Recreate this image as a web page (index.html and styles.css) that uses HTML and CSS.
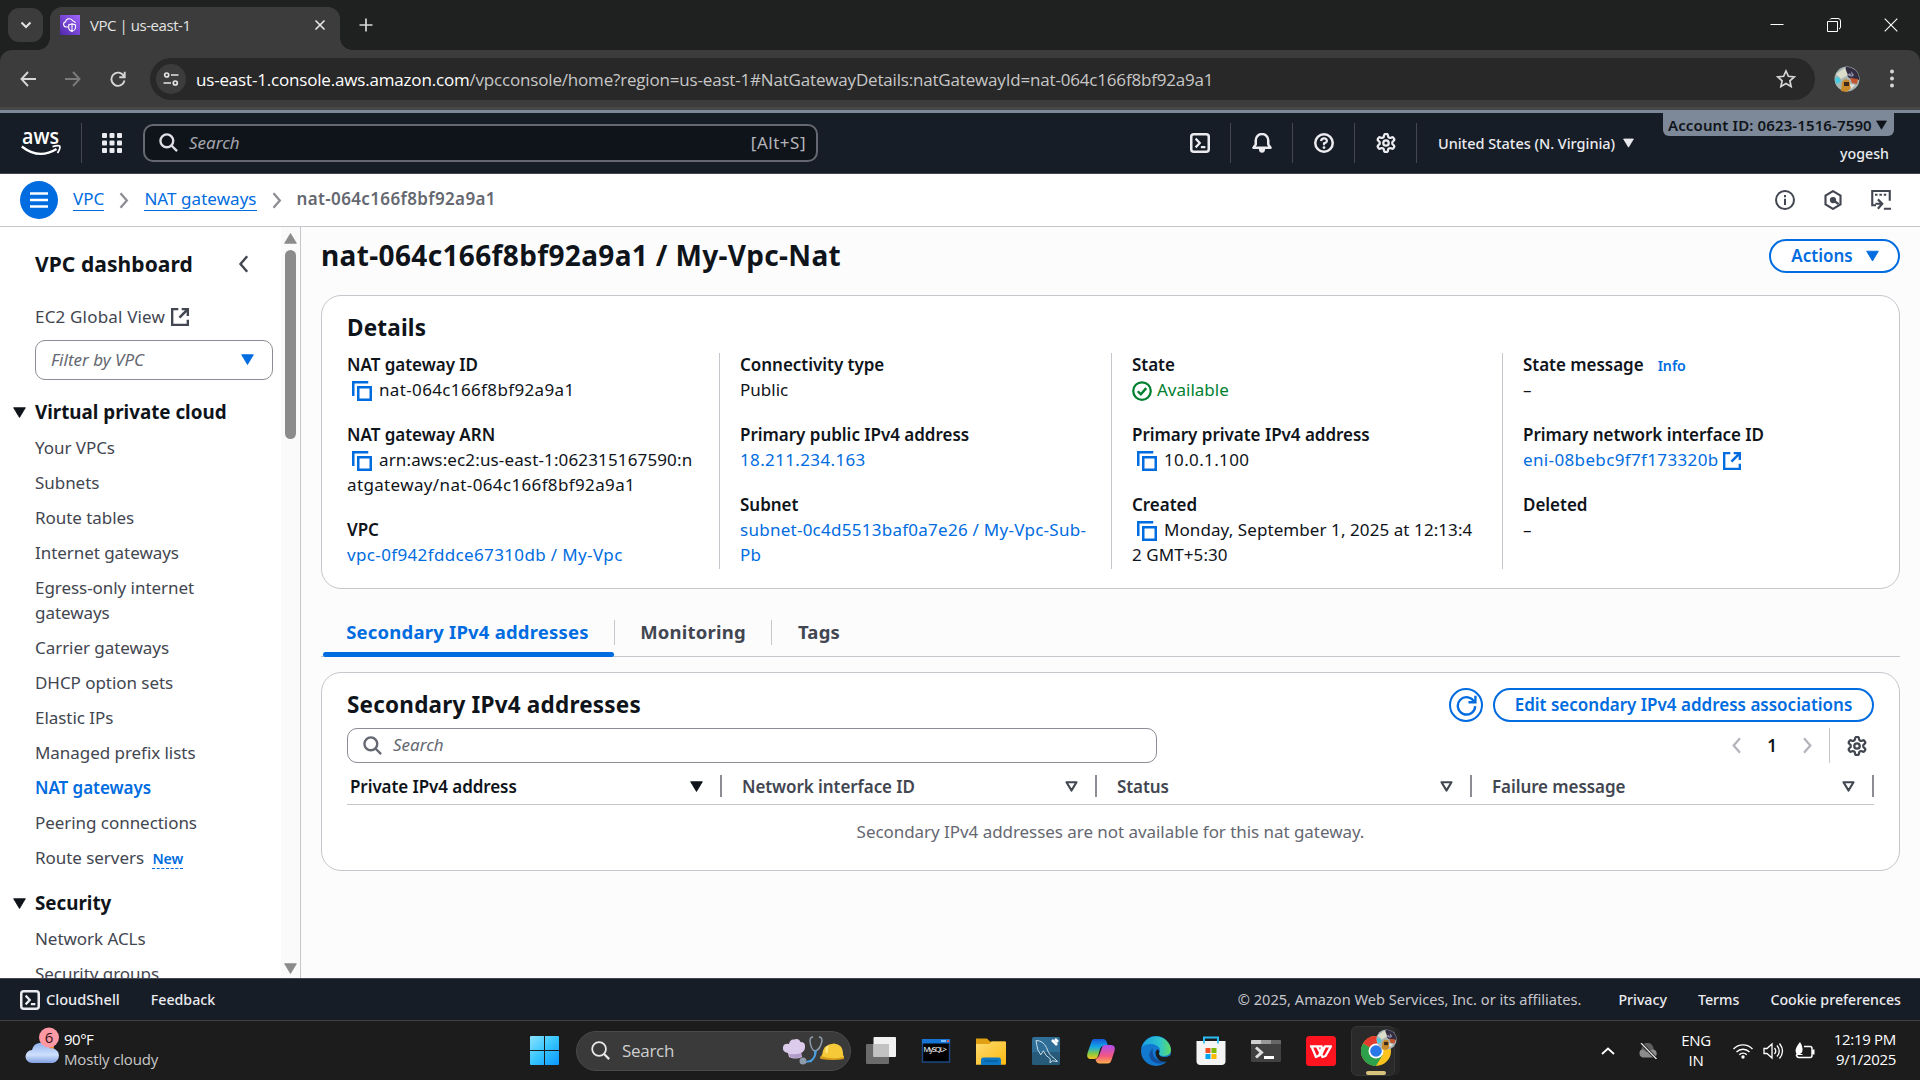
FILE: index.html
```html
<!DOCTYPE html>
<html lang="en">
<head>
<meta charset="utf-8">
<title>VPC | us-east-1</title>
<link rel="stylesheet" href="styles.css">
</head>
<body>
<svg class="defs" width="0" height="0">
  <symbol id="search" viewBox="0 0 16 16"><circle cx="6.6" cy="6.6" r="5.4" fill="none" stroke="currentColor" stroke-width="2"/><path d="M10.5 10.5l4.7 4.7" stroke="currentColor" stroke-width="2" fill="none"/></symbol>
  <symbol id="copy" viewBox="0 0 16 16"><path d="M1 12V1h12M5 5h10v10H5z" fill="none" stroke="currentColor" stroke-width="2"/></symbol>
  <symbol id="external" viewBox="0 0 16 16"><path d="M6.5 1H1v14h14v-4.5M9.5 1H15v6M15 1L7.5 8.500" fill="none" stroke="currentColor" stroke-width="2.200"/></symbol>
  <symbol id="shell" viewBox="0 0 16 16"><rect x="1" y="1" width="14" height="14" rx="2" fill="none" stroke="currentColor" stroke-width="2"/><path d="M4.5 4.500L7.800 8l-3.300 3.500M8.700 11.200h3.600" fill="none" stroke="currentColor" stroke-width="1.800"/></symbol>
  <symbol id="gear" viewBox="1 1 22 22"><path d="M12.22 2h-.44a2 2 0 0 0-2 2v.18a2 2 0 0 1-1 1.73l-.43.25a2 2 0 0 1-2 0l-.15-.08a2 2 0 0 0-2.73.73l-.22.38a2 2 0 0 0 .73 2.73l.15.1a2 2 0 0 1 1 1.72v.51a2 2 0 0 1-1 1.74l-.15.09a2 2 0 0 0-.73 2.73l.22.38a2 2 0 0 0 2.73.73l.15-.08a2 2 0 0 1 2 0l.43.25a2 2 0 0 1 1 1.73V20a2 2 0 0 0 2 2h.44a2 2 0 0 0 2-2v-.18a2 2 0 0 1 1-1.73l.43-.25a2 2 0 0 1 2 0l.15.08a2 2 0 0 0 2.73-.73l.22-.39a2 2 0 0 0-.73-2.73l-.15-.08a2 2 0 0 1-1-1.74v-.5a2 2 0 0 1 1-1.74l.15-.09a2 2 0 0 0 .73-2.73l-.22-.38a2 2 0 0 0-2.73-.73l-.15.08a2 2 0 0 1-2 0l-.43-.25a2 2 0 0 1-1-1.73V4a2 2 0 0 0-2-2z" fill="none" stroke="currentColor" stroke-width="2.5"/><circle cx="12" cy="12" r="3" fill="none" stroke="currentColor" stroke-width="2.5"/></symbol>
  <symbol id="tri" viewBox="0 0 12 10"><path d="M.6 .6h10.8L6 9.6z" fill="currentColor" stroke="currentColor" stroke-width=".8" stroke-linejoin="round"/></symbol>
  <symbol id="tri-open" viewBox="0 0 12 10"><path d="M1.4 1.1h9.2L6 8.7z" fill="none" stroke="currentColor" stroke-width="2" stroke-linejoin="round"/></symbol>
  <symbol id="chev" viewBox="0 0 10 18"><path d="M1.3 1.3L8 9l-6.7 7.7" fill="none" stroke="currentColor" stroke-width="2.4"/></symbol>
  <symbol id="portrait" viewBox="0 0 26 26"><circle cx="13" cy="13" r="12.5" fill="#a9b6b4"/><path d="M12 1a12 12 0 0 1 13 13l-10-2-4-6z" fill="#332c40"/><path d="M2 8l9-6 3 7-7 4z" fill="#dcdccb"/><path d="M1 12l4-1 2 5-5 2z" fill="#48cbe0"/><path d="M7 25l1-9 3-3 4 1 2 8-4 4z" fill="#c98a2b"/><path d="M16 12l8 1-1 5-5-1z" fill="#c4562e"/><path d="M17 5l3 4-2 2zM13 9l3-2 2 4z" fill="#8e95ad"/><path d="M10 16h5v4h-5z" fill="#3d2a1c"/><path d="M16 18l5 1-4 4z" fill="#e8e4da"/></symbol>
</svg>

<header class="chrome">
  <div class="tabstrip">
    <div class="tab-search"><svg width="12" height="8" viewBox="0 0 12 8"><path d="M1.5 1.5L6 6l4.500-4.500" fill="none" stroke="#e3e3e3" stroke-width="2"/></svg></div>
    <div class="tab">
      <svg class="favicon" width="20" height="20" viewBox="0 0 20 20"><defs><linearGradient id="fav" x1="0" y1="1" x2="1" y2="0"><stop offset="0" stop-color="#4d27a8"/><stop offset="1" stop-color="#a166ff"/></linearGradient></defs><rect width="20" height="20" fill="url(#fav)"/><path d="M8 12H6a2.600 2.600 0 0 1-.5-5.100A4 4 0 0 1 13 6q2 .2 2.400 2" fill="none" stroke="#fff" stroke-width="1.100"/><path d="M12 8.800l3.500 1.200v3q-.5 2.500-3.500 3.600Q9 15.500 8.700 13v-3zM12 9v7" fill="none" stroke="#fff" stroke-width="1.100"/></svg>
      <span class="tab-title">VPC | us-east-1</span>
      <svg width="12" height="12" viewBox="0 0 12 12"><path d="M1.500 1.500l9 9M10.500 1.500l-9 9" stroke="#e3e3e3" stroke-width="1.700"/></svg>
    </div>
    <svg class="plus" width="14" height="14" viewBox="0 0 14 14"><path d="M7 .5v13M.5 7h13" stroke="#d8d8d8" stroke-width="1.700"/></svg>
    <div class="win-controls">
      <svg width="14" height="14" viewBox="0 0 14 14"><path d="M.5 6.500h13" stroke="#fff" stroke-width="1"/></svg>
      <svg width="14" height="14" viewBox="0 0 14 14"><path d="M.5 3.500h10v10H.5zM3 1.500Q3.500.5 5 .5h6q2.500 0 2.500 2.500v6q0 1.500-1.500 2" fill="none" stroke="#fff" stroke-width="1"/></svg>
      <svg width="14" height="14" viewBox="0 0 14 14"><path d="M.7.7l12.600 12.600M13.300.7L.7 13.300" stroke="#fff" stroke-width="1.100"/></svg>
    </div>
  </div>
  <div class="toolbar">
    <svg class="nav-ico" width="16" height="16" viewBox="0 0 16 16"><path d="M8 1L1.500 8 8 15M1.500 8H16" fill="none" stroke="#d5d5d5" stroke-width="1.900"/></svg>
    <svg class="nav-ico" width="16" height="16" viewBox="0 0 16 16"><path d="M8 1l6.500 7L8 15M14.500 8H0" fill="none" stroke="#7b7b7b" stroke-width="1.900"/></svg>
    <svg class="nav-ico" width="16" height="16" viewBox="0 0 16 16"><path d="M13.800 5A6.600 6.600 0 1 0 14.500 9.500M14.700 .8v5.400H9.300" fill="none" stroke="#d5d5d5" stroke-width="1.900"/></svg>
    <div class="omnibox">
      <span class="site-info"><svg width="16" height="16" viewBox="0 0 16 16"><g fill="none" stroke="#e3e3e3" stroke-width="1.700"><circle cx="3.700" cy="4" r="2"/><path d="M8 4h7.500M.5 12H8"/><circle cx="12.300" cy="12" r="2"/></g></svg></span>
      <span class="url"><b>us-east-1.console.aws.amazon.com</b>/vpcconsole/home?region=us-east-1#NatGatewayDetails:natGatewayId=nat-064c166f8bf92a9a1</span>
      <svg width="20" height="20" viewBox="0 0 20 20"><path d="M10 2l2.400 5.300 5.800.6-4.300 3.900 1.200 5.700-5.100-2.900-5.100 2.900 1.200-5.700L1.800 7.900l5.800-.6z" fill="none" stroke="#d5d5d5" stroke-width="1.700"/></svg>
    </div>
    <svg class="avatar" width="26" height="26"><use href="#portrait"/></svg>
    <svg width="6" height="24" viewBox="0 0 6 24"><g fill="#d5d5d5"><circle cx="3" cy="4.500" r="2"/><circle cx="3" cy="11.500" r="2"/><circle cx="3" cy="18.500" r="2"/></g></svg>
  </div>
</header>

<nav class="aws-nav">
  <svg class="aws-logo" width="40" height="28" viewBox="0 0 40 28"><text x="1" y="15" textLength="37" lengthAdjust="spacingAndGlyphs">aws</text><path d="M.8 17.500Q18 31 35.500 20" fill="none" stroke="#fff" stroke-width="2.300"/><path d="M31.500 17.600q6-1.500 7.200-.4 1 1.800-2.200 6.800" fill="none" stroke="#fff" stroke-width="1.800"/></svg>
  <div class="apps"><svg width="20" height="20" viewBox="0 0 20 20"><g fill="#ebebf0"><rect width="5" height="5" rx="1"/><rect x="7.500" width="5" height="5" rx="1"/><rect x="15" width="5" height="5" rx="1"/><rect y="7.500" width="5" height="5" rx="1"/><rect x="7.500" y="7.500" width="5" height="5" rx="1"/><rect x="15" y="7.500" width="5" height="5" rx="1"/><rect y="15" width="5" height="5" rx="1"/><rect x="7.500" y="15" width="5" height="5" rx="1"/><rect x="15" y="15" width="5" height="5" rx="1"/></g></svg></div>
  <div class="nav-search"><svg width="19" height="19"><use href="#search"/></svg><i>Search</i><span>[Alt+S]</span></div>
  <div class="nav-cells">
    <div class="cell"><svg width="20" height="20"><use href="#shell"/></svg></div>
    <div class="cell"><svg width="20" height="20" viewBox="0 0 16 16"><path d="M1.200 12h13.600L13 9.300V6A5 5 0 0 0 3 6v3.300z" transform="translate(0 -.2)" fill="none" stroke="currentColor" stroke-width="2" stroke-linejoin="round"/><path d="M5.500 12.500h5a2.500 3.300 0 0 1-5 0z" fill="currentColor"/></svg></div>
    <div class="cell"><svg width="20" height="20" viewBox="0 0 16 16"><circle cx="8" cy="8" r="7" fill="none" stroke="currentColor" stroke-width="2"/><path d="M5.700 6.500Q5.800 4.300 8 4.300t2.300 2Q10.300 7.500 8 8.300V9.700" fill="none" stroke="currentColor" stroke-width="1.700"/><circle cx="8" cy="11.600" r="1.100" fill="currentColor"/></svg></div>
    <div class="cell"><svg width="20" height="20"><use href="#gear"/></svg></div>
  </div>
  <div class="region">United States (N. Virginia)<svg width="11" height="10"><use href="#tri"/></svg></div>
  <div class="account">
    <div class="account-id">Account ID: 0623-1516-7590<svg width="11" height="10"><use href="#tri"/></svg></div>
    <div class="user">yogesh</div>
  </div>
</nav>

<div class="crumbs">
  <div class="menu-btn"><svg width="18" height="16" viewBox="0 0 18 16"><path d="M0 1.500h18M0 8h18M0 14.500h18" stroke="#fff" stroke-width="2.400"/></svg></div>
  <a>VPC</a><svg class="sep" width="10" height="17"><use href="#chev"/></svg>
  <a>NAT gateways</a><svg class="sep" width="10" height="17"><use href="#chev"/></svg>
  <b class="id">nat-064c166f8bf92a9a1</b>
  <div class="crumb-icons">
    <svg width="20" height="20" viewBox="0 0 16 16"><circle cx="8" cy="8" r="7.200" fill="none" stroke="currentColor" stroke-width="1.600"/><path d="M8 7v5M8 4v1.800" stroke="currentColor" stroke-width="1.600"/></svg>
    <svg width="20" height="20" viewBox="0 0 16 16"><path d="M8 .9l6 3.500v7.200l-6 3.500-6-3.500V4.400z" fill="none" stroke="currentColor" stroke-width="1.700"/><circle cx="8" cy="8" r="2.500" fill="currentColor"/><path d="M8 8l4.500 3.300" stroke="currentColor" stroke-width="1.800"/></svg>
    <svg width="20" height="20" viewBox="0 0 16 16"><path d="M4 12.200H1V.8h14V8.500" fill="none" stroke="currentColor" stroke-width="1.700"/><path d="M3.200 3.800h2M6.700 3.800h2M10.200 3.800h2M10.300 15H16" stroke="currentColor" stroke-width="1.700"/><path d="M3.500 11h4.500M5.500 7.500L9 11l-3.500 4" fill="none" stroke="currentColor" stroke-width="1.700"/></svg>
  </div>
</div>

<div class="body">
  <aside class="side">
    <div class="side-content">
      <div class="side-head"><h3>VPC dashboard</h3><svg class="flip" width="11" height="18"><use href="#chev"/></svg></div>
      <div class="ec2">EC2 Global View <svg width="18" height="18"><use href="#external"/></svg></div>
      <div class="select"><i>Filter by VPC</i><svg width="13" height="11"><use href="#tri"/></svg></div>
      <h4><svg width="13" height="11"><use href="#tri"/></svg>Virtual private cloud</h4>
      <ul>
        <li>Your VPCs</li><li>Subnets</li><li>Route tables</li><li>Internet gateways</li><li>Egress-only internet<br>gateways</li><li>Carrier gateways</li><li>DHCP option sets</li><li>Elastic IPs</li><li>Managed prefix lists</li><li class="on">NAT gateways</li><li>Peering connections</li><li>Route servers <span class="new">New</span></li>
      </ul>
      <h4 class="sec"><svg width="13" height="11"><use href="#tri"/></svg>Security</h4>
      <ul><li>Network ACLs</li><li>Security groups</li></ul>
    </div>
    <div class="scroll">
      <svg class="up" width="13" height="11"><use href="#tri"/></svg>
      <div class="thumb"></div>
      <svg class="down" width="13" height="11"><use href="#tri"/></svg>
    </div>
  </aside>

  <main>
    <div class="title-row"><h1>nat-064c166f8bf92a9a1 / My-Vpc-Nat</h1><div class="btn actions">Actions<svg width="13" height="12"><use href="#tri"/></svg></div></div>

    <section class="card details">
      <h2>Details</h2>
      <div class="cols">
        <div class="col">
          <dl><dt>NAT gateway ID</dt><dd><svg class="copy" width="20" height="20"><use href="#copy"/></svg><span class="id">nat-064c166f8bf92a9a1</span></dd></dl>
          <dl><dt>NAT gateway ARN</dt><dd><svg class="copy" width="20" height="20"><use href="#copy"/></svg><span class="arn">arn:aws:ec2:us-east-1:062315167590:n</span><br><span class="id">atgateway/nat-064c166f8bf92a9a1</span></dd></dl>
          <dl><dt>VPC</dt><dd><a class="id">vpc-0f942fddce67310db / My-Vpc</a></dd></dl>
        </div>
        <div class="col">
          <dl><dt>Connectivity type</dt><dd>Public</dd></dl>
          <dl><dt>Primary public IPv4 address</dt><dd><a class="id">18.211.234.163</a></dd></dl>
          <dl><dt>Subnet</dt><dd><a class="subnet">subnet-0c4d5513baf0a7e26 / My-Vpc-Sub-<br>Pb</a></dd></dl>
        </div>
        <div class="col">
          <dl><dt>State</dt><dd class="ok"><svg width="20" height="20" viewBox="0 0 16 16"><circle cx="8" cy="8" r="7" fill="none" stroke="currentColor" stroke-width="1.800"/><path d="M4.600 8.200l2.500 2.500 4.300-5" fill="none" stroke="currentColor" stroke-width="1.900"/></svg>Available</dd></dl>
          <dl><dt>Primary private IPv4 address</dt><dd><svg class="copy" width="20" height="20"><use href="#copy"/></svg><span class="id">10.0.1.100</span></dd></dl>
          <dl><dt>Created</dt><dd class="date"><svg class="copy" width="20" height="20"><use href="#copy"/></svg>Monday, September 1, 2025 at 12:13:4<br>2 GMT+5:30</dd></dl>
        </div>
        <div class="col">
          <dl><dt>State message<span class="info">Info</span></dt><dd>–</dd></dl>
          <dl><dt>Primary network interface ID</dt><dd><a class="id">eni-08bebc9f7f173320b <svg class="ext" width="18" height="18"><use href="#external"/></svg></a></dd></dl>
          <dl><dt>Deleted</dt><dd>–</dd></dl>
        </div>
      </div>
    </section>

    <div class="tabs"><div class="t t1">Secondary IPv4 addresses</div><div class="t t2">Monitoring</div><div class="t t3">Tags</div></div>

    <section class="card second">
      <div class="card-head"><h2>Secondary IPv4 addresses</h2>
        <div class="round"><svg width="21" height="21" viewBox="0 0 16 16"><path d="M14 5.500A6.600 6.600 0 1 0 14.600 8.500M14.800 .5v5H9.500" fill="none" stroke="currentColor" stroke-width="1.800"/></svg></div>
        <div class="btn edit">Edit secondary IPv4 address associations</div></div>
      <div class="filter-row">
        <div class="filter"><svg width="19" height="19"><use href="#search"/></svg><i>Search</i></div>
        <div class="pager"><svg class="flip" width="11" height="17"><use href="#chev"/></svg><b>1</b><svg width="11" height="17"><use href="#chev"/></svg></div>
        <div class="prefs"><svg width="20" height="20"><use href="#gear"/></svg></div>
      </div>
      <div class="thead">
        <div class="th sorted">Private IPv4 address<svg width="13" height="11"><use href="#tri"/></svg></div>
        <div class="th">Network interface ID<svg width="13" height="11"><use href="#tri-open"/></svg></div>
        <div class="th">Status<svg width="13" height="11"><use href="#tri-open"/></svg></div>
        <div class="th">Failure message<svg width="13" height="11"><use href="#tri-open"/></svg></div>
      </div>
      <div class="empty">Secondary IPv4 addresses are not available for this nat gateway.</div>
    </section>
  </main>
</div>

<footer class="aws-foot">
  <svg width="20" height="20"><use href="#shell"/></svg><span class="f1">CloudShell</span><span class="f2">Feedback</span>
  <span class="copyr">© 2025, Amazon Web Services, Inc. or its affiliates.</span><span class="f3">Privacy</span><span class="f4">Terms</span><span class="f5">Cookie preferences</span>
</footer>

<div class="taskbar">
  <div class="weather">
    <svg width="36" height="46" viewBox="0 0 36 46"><defs><linearGradient id="cl" x1="0" y1="0" x2="0" y2="1"><stop offset="0" stop-color="#8fb2ee"/><stop offset=".6" stop-color="#cfe0fc"/><stop offset="1" stop-color="#7f9fe0"/></linearGradient></defs><circle cx="23" cy="24" r="7" fill="#f08a2c"/><path d="M7 40a6.500 6.500 0 0 1 0-13 9.500 9.500 0 0 1 18-1.500A7.400 7.400 0 0 1 28 40z" transform="translate(1 0)" fill="url(#cl)"/><circle cx="25" cy="14.500" r="10" fill="#ff99a4"/><text x="25" y="20" text-anchor="middle">6</text></svg>
    <div class="w-text"><b>90°F</b><span>Mostly cloudy</span></div>
  </div>
  <svg class="win" width="29" height="29" viewBox="0 0 29 29"><defs><linearGradient id="wg" x1="0" y1="0" x2="1" y2="1"><stop offset="0" stop-color="#8be3ff"/><stop offset=".5" stop-color="#36c5ff"/><stop offset="1" stop-color="#0a95ff"/></linearGradient></defs><path d="M0 1q0-1 1-1h13v14H0zM15 0h13q1 0 1 1v13H15zM0 15h14v14H1q-1 0-1-1zM15 15h14v13q0 1-1 1H15z" fill="url(#wg)"/></svg>
  <div class="tb-search"><svg width="19" height="19" viewBox="0 0 16 16"><circle cx="6.800" cy="6.800" r="5.800" fill="none" stroke="#e8e8e8" stroke-width="1.500"/><path d="M11 11l4.300 4.300" stroke="#e8e8e8" stroke-width="1.900"/></svg><span>Search</span>
    <svg width="62" height="32" viewBox="0 0 62 32"><path d="M6 18Q0 17 1 12q1-4 6-3 1-5 5-4.500Q17 3 18.500 7q5 0 4.500 5 0 4-4 6l1 4q-7 3-13 0z" fill="#dccbea"/><path d="M7 19l1 3q6 2 11 0l.5-4q-6 2-12.500 1z" fill="#b39bc9"/><path d="M31 2q-3 0-3 4 1 9 5 10 5-1 7-10 0-4-3-4" fill="none" stroke="#8f9dad" stroke-width="1.500"/><path d="M33 16q1 10-9 11M34 15q0 8-6 12" fill="none" stroke="#4a9fe0" stroke-width="1.700"/><circle cx="21" cy="26" r="3.500" fill="#8d9bac"/><path d="M40 20q1-11 12-11.500Q62 10 61 20q2 2 0 4H39q-2-2 1-4z" fill="#f5c938"/><path d="M39 21q12 4 22 1l1 2q-11 2-23 0z" fill="#d99d18"/><path d="M46 11q-2 3-1.500 7" fill="none" stroke="#ffe98a" stroke-width="2"/></svg></div>
  <div class="apps-row">
    <svg width="30" height="30" viewBox="0 0 30 30"><rect y="8" width="23" height="20" rx="1" fill="#6b6b6b"/><rect x="7.500" y="1" width="22.500" height="20" rx="1" fill="#f1f1f1"/><rect x="7.500" y="8" width="15.500" height="13" fill="#c2c2c2"/></svg>
    <svg width="30" height="30" viewBox="0 0 30 30"><rect x="1.500" y="4" width="27" height="22" fill="#000" stroke="#1d4783" stroke-width="1.500"/><rect x="1" y="3" width="28" height="4.500" fill="#1674d4"/><path d="M20 5h5" stroke="#7dc0ff" stroke-width="2"/><path d="M26 5h2" stroke="#e4574b" stroke-width="2"/><text class="mysql" x="2.500" y="15.500" textLength="23">MySQL&gt;</text></svg>
    <svg width="30" height="30" viewBox="0 0 30 30"><defs><linearGradient id="fo" x1="0" y1="0" x2="1" y2="1"><stop offset="0" stop-color="#ffdb70"/><stop offset="1" stop-color="#fbb911"/></linearGradient></defs><path d="M0 2.500h11l3 3h15q1 0 1 1V12H0z" fill="#e0a012"/><path d="M0 8h13l3-2.500h13q1 0 1 1V28q0 .8-1 .8H0z" fill="url(#fo)"/><path d="M5 29v-5q0-2.500 2.500-2.500h15q2.500 0 2.500 2.500v5z" fill="#0c77c4"/><path d="M8.500 25h13" stroke="#06508c" stroke-width="1"/></svg>
    <svg width="30" height="30" viewBox="0 0 30 30"><rect x="1" y="1" width="28" height="28" rx="2" fill="#2f6e97"/><rect x="1" y="16" width="28" height="13" rx="2" fill="#275978"/><path d="M5 4.500q7 0 10.500 7 2.500 8 8 11l3 3-5-.7-2.500 2 .3-4q-5-3-7-8l-2.500 4-3-5Q6 10 5 4.500z" fill="none" stroke="#c9deea" stroke-width="1"/><path d="M21 4l5 5M24 3l3 3" stroke="#fff" stroke-width="2.500"/></svg>
    <svg width="30" height="30" viewBox="0 0 30 30"><defs><linearGradient id="co1" x1="0" y1="0" x2="0" y2="1"><stop offset="0" stop-color="#1458d8"/><stop offset=".4" stop-color="#14a8e8"/><stop offset=".75" stop-color="#8ccc3c"/><stop offset="1" stop-color="#ffc021"/></linearGradient><linearGradient id="co2" x1="0" y1="0" x2="0" y2="1"><stop offset="0" stop-color="#b04cf0"/><stop offset=".6" stop-color="#f2587f"/><stop offset="1" stop-color="#ffb04c"/></linearGradient></defs><path d="M8 3h9q3 0 4 4l1 3h-5q-2 0-3 3l-2 7q-1 3-4 3H5q-5 0-3.500-6L5 7q1-4 3-4z" fill="url(#co1)"/><path d="M22 9h3q5 0 3.500 6L25.500 24q-1 3.500-4 3.500h-8q-3 0-4-4l1-1q2-1 3-4l2.500-7q1-2.500 3-2.500z" fill="url(#co2)"/></svg>
    <svg width="30" height="30" viewBox="0 0 30 30"><defs><linearGradient id="ed1"><stop offset="0" stop-color="#1b9de2"/><stop offset=".6" stop-color="#2cc4d0"/><stop offset="1" stop-color="#5fdb62"/></linearGradient></defs><circle cx="15" cy="15" r="15" fill="#1279d0"/><path d="M.5 12A15 15 0 0 1 30 13.500Q30 20 23 20q-5 0-5-2.500 2-3 0-6Q15 8 10 8 3 8 .5 12z" fill="url(#ed1)"/><path d="M12 12q-7 7-1 13 8 6 16-1-2 0-5 1-8 0-10-7-1-3 0-6z" fill="#12519f"/><path d="M18 17.500Q18 20 22 21q4 .5 7-1.500l1.500 1-3 5q-5 1-9-1-4-3-4-8.500l1.500-2.500q3 0 2 4z" fill="#1c1c1c"/></svg>
    <svg width="30" height="30" viewBox="0 0 30 30"><path d="M8 6V1.500h14V6" fill="none" stroke="#2cbcf2" stroke-width="2"/><path d="M.5 5h29v20q0 4-4 4h-21q-4 0-4-4z" fill="#f4f4f4"/><path d="M8 5v2.500M22 5v2.500" stroke="#2cbcf2" stroke-width="1.700"/><path fill="#f25022" d="M9.500 12h5v5h-5z"/><path fill="#7fba00" d="M15.500 12h5v5h-5z"/><path fill="#00a4ef" d="M9.500 18h5v5h-5z"/><path fill="#ffb900" d="M15.500 18h5v5h-5z"/></svg>
    <svg width="30" height="30" viewBox="0 0 30 30"><rect y="4" width="30" height="22" rx="1" fill="#414141"/><path d="M0 8V5q0-1 1-1h9v4z" fill="#cfcfcf"/><path d="M10 4h10v4H10z" fill="#999"/><path d="M20 4h9q1 0 1 1v3H20z" fill="#666"/><path d="M5 11.500l5.500 5-5.500 5" fill="none" stroke="#ddd" stroke-width="3"/><path d="M13 21.500h10" stroke="#fff" stroke-width="3"/></svg>
    <svg width="30" height="30" viewBox="0 0 30 30"><rect width="30" height="30" rx="3.500" fill="#ff1420"/><path d="M4 10.300h12.500M5.600 10.500L10 21l3.200-1.500L16.500 10.500M11 10.500L16.500 21l3-1L25 10.300h-6L15 19" fill="none" stroke="#fff" stroke-width="2.300" stroke-linejoin="round"/></svg>
    <div class="chrome-tile">
      <svg width="30" height="30" viewBox="0 0 30 30"><circle cx="15" cy="15" r="15" fill="#fcc31e"/><path d="M15 15L2 7.500A15 15 0 0 1 28 7.500z" fill="#e33b2e"/><path d="M15 15L2 7.500A15 15 0 0 0 15 30l6.500-11z" fill="#2ca04a"/><circle cx="15" cy="15" r="7.500" fill="#fff"/><circle cx="15" cy="15" r="5.800" fill="#2878e8"/></svg>
      <svg class="mini" width="21" height="21"><use href="#portrait"/></svg>
      <span class="bar"></span>
    </div>
  </div>
  <div class="tray">
    <svg width="14" height="8" viewBox="0 0 14 8"><path d="M1 7l6-5.500L13 7" fill="none" stroke="#fff" stroke-width="1.800"/></svg>
    <svg class="one" width="20" height="16" viewBox="0 0 20 16"><path d="M4.500 14.500a4.500 4.500 0 0 1 0-8.500 6 6 0 0 1 11 .5 4.200 4.200 0 0 1 .5 8z" fill="#8c8c8c"/><path d="M3.500 5.500a6 6 0 0 1 12 .5l-7 3z" fill="#5e5e5e"/><path d="M3 0l15.500 16" stroke="#1c1c1c" stroke-width="3"/><path d="M3 0l15.500 16" stroke="#eee" stroke-width="1.200"/></svg>
    <div class="lang">ENG<br>IN</div>
    <svg class="wifi" width="20" height="16" viewBox="0 0 20 16"><g fill="none" stroke="#fff" stroke-width="1.400"><path d="M.5 6a13 13 0 0 1 19 0M3.500 9a9 9 0 0 1 13 0M6.300 11.800a5 5 0 0 1 7.400 0"/></g><circle cx="10" cy="14" r="1.700" fill="#fff"/></svg>
    <svg class="vol" width="21" height="18" viewBox="0 0 21 18"><g fill="none" stroke="#fff" stroke-width="1.300"><path d="M1 6.500h3l5-4.500v14l-5-4.500H1zM11.500 6q2.500 3 0 6M14 3.500q4.500 5.500 0 11M16.500 1.500q6 7.500 0 15"/></g></svg>
    <svg class="bat" width="21" height="18" viewBox="0 0 21 18"><path d="M10 4.500h6q2 0 2 2v7q0 2-2 2H5q-2 0-2.500-2M19 8v4" fill="none" stroke="#fff" stroke-width="1.500"/><path d="M19 7.500h1.500v5H19z" fill="#fff"/><path d="M6 0q3 4 2.500 8 0 3.500-3 4h3v1H4l-1.500 1-1-.5 1-2Q-.5 8 6 0z" fill="#fff"/></svg>
    <div class="clock">12:19 PM<br>9/1/2025</div>
  </div>
</div>
</body>
</html>
```
FILE: styles.css
```css
* { box-sizing: border-box; }
body { margin: 0; width: 1920px; height: 1080px; overflow: hidden; display: flex; flex-direction: column; font: 17px/25px "Noto Sans", sans-serif; color: #0f141a; background: #fcfcfd; }
h1, h2, h3, h4, ul, dl, dd { margin: 0; padding: 0; }
ul { list-style: none; }
svg { flex: none; }
a { color: #006ce0; }
.defs { position: absolute; }
.flip { transform: scaleX(-1); }
.id { letter-spacing: .36px; }
.arn { letter-spacing: .14px; }
.subnet { letter-spacing: .26px; }
.date { letter-spacing: .08px; }

/* browser frame */
.chrome { height: 110px; background: #1f2120; font-family: "Open Sans", sans-serif; flex: none; }
.tabstrip { height: 50px; display: flex; align-items: center; }
.tab-search { width: 35px; height: 34px; margin-left: 8px; border-radius: 11px; background: #3c3c3c; display: flex; align-items: center; justify-content: center; }
.tab { position: relative; width: 290px; height: 43px; margin: 7px 0 0 7px; border-radius: 12px 12px 0 0; background: #3c3c3c; display: flex; align-items: center; padding: 0 14px 7px 10px; }
.tab::before, .tab::after { content: ""; position: absolute; bottom: 0; width: 12px; height: 12px; }
.tab::before { left: -12px; background: radial-gradient(circle at 0 0, transparent 11.500px, #3c3c3c 12px); }
.tab::after { right: -12px; background: radial-gradient(circle at 100% 0, transparent 11.500px, #3c3c3c 12px); }
.tab-title { flex: 1; margin-left: 10px; font-size: 15px; letter-spacing: -.45px; color: #e3e3e3; }
.plus { margin-left: 19px; }
.win-controls { margin-left: auto; display: flex; gap: 43px; padding-right: 22px; }
.toolbar { height: 60px; background: #3c3c3c; border-radius: 12px 12px 0 0; border-bottom: 3px solid #474747; display: flex; align-items: center; padding-left: 20px; }
.nav-ico { margin-right: 29px; }
.omnibox { width: 1665px; height: 42px; margin-left: -5px; border-radius: 21px; background: #282828; display: flex; align-items: center; padding: 0 19px 0 6px; }
.site-info { width: 30px; height: 30px; border-radius: 50%; background: #3c3c3c; display: flex; align-items: center; justify-content: center; }
.url { flex: 1; margin-left: 10px; padding-top: 1px; font-size: 17px; letter-spacing: -.18px; color: #c7c7c7; white-space: nowrap; }
.url b { font-weight: 400; color: #fff; }
.avatar { margin: 0 29px 0 19px; }

/* console navigation */
.aws-nav { height: 64px; flex: none; padding-top: 1px; background: #161d26; box-shadow: inset 0 3px #7d8998, inset 0 -1px #424650; display: flex; align-items: center; color: #ebebf0; font-size: 15px; }
.aws-logo { margin-left: 21px; overflow: visible; }
.aws-logo text { font: 600 22px "Open Sans", sans-serif; fill: #fff; }
.apps { margin-left: 20px; width: 62px; height: 40px; border-left: 1.500px solid #424650; display: flex; align-items: center; padding-left: 20px; }
.nav-search { width: 675px; height: 38px; border: 2px solid #656871; border-radius: 10px; background: #0f141a; display: flex; align-items: center; padding: 0 10px 0 14px; font-size: 17px; color: #b4b4bb; }
.nav-search svg { color: #dedee3; }
.nav-search i { flex: 1; margin-left: 11px; color: #a4a4ad; }
.nav-search span { letter-spacing: .5px; }
.nav-cells { margin-left: 351px; display: flex; }
.cell { width: 62px; height: 40px; border-right: 1px solid #424650; display: flex; align-items: center; justify-content: center; }
.region { margin-left: 21px; width: 225px; padding-top: 1px; font-size: 14.500px; letter-spacing: -.03px; font-weight: 500; display: flex; align-items: center; gap: 8px; white-space: nowrap; }
.account { align-self: stretch; width: 231px; margin-top: -1px; }
.account-id { height: 26px; padding: 4px 7px 0 5px; background: #7d8998; border-radius: 0 0 6px 6px; color: #0f141a; font-weight: 600; display: flex; justify-content: space-between; align-items: center; white-space: nowrap; font-size: 15px; letter-spacing: .12px; }
.user { text-align: right; padding: 5px 5px 0 0; font-size: 14.200px; font-weight: 500; }

.crumbs { height: 53px; flex: none; background: #fff; border-bottom: 1px solid #c6c6cd; display: flex; align-items: center; padding-left: 20px; }
.menu-btn { width: 38px; height: 38px; border-radius: 50%; background: #006ce0; display: flex; align-items: center; justify-content: center; margin-right: 15px; }
.crumbs a { border-bottom: 1.500px solid #006ce0; line-height: 21px; padding-bottom: 1px; margin-top: -1px; letter-spacing: .05px; }
.crumbs b { color: #656871; font-weight: 600; line-height: 24px; margin-top: -2px; }
.sep { color: #8c8c94; margin: 0 15px; }
.crumb-icons { margin-left: auto; display: flex; gap: 28px; padding-right: 29px; color: #424650; }

.body { height: 751px; flex: none; display: flex; }
.side { width: 301px; border-right: 1px solid #c6c6cd; background: #fff; display: flex; overflow: hidden; }
.side-content { width: 281px; padding-left: 35px; color: #424650; white-space: nowrap; }
.side-head { display: flex; justify-content: space-between; align-items: center; padding: 22px 32px 0 0; height: 52px; }
.side-head h3 { font: 700 21px/30px "Noto Sans", sans-serif; letter-spacing: .08px; color: #0f141a; }
.ec2 { margin-top: 25px; display: flex; align-items: center; gap: 6px; letter-spacing: .18px; }
.select { width: 238px; height: 40px; margin-top: 11px; border: 1.500px solid #8c8c94; border-radius: 10px; display: flex; align-items: center; justify-content: space-between; padding: 0 18px 1px 15px; color: #656871; }
.select svg { color: #006ce0; }
.side h4 { margin: 20px 0 10px -22px; display: flex; align-items: center; gap: 9px; font: 700 18.800px/25px "Noto Sans", sans-serif; color: #0f141a; }
.side li { margin-bottom: 10px; letter-spacing: -.05px; }
.side li.on { color: #006ce0; font-weight: 600; }
.side h4.sec { margin-top: 21px; }
.new { margin-left: 4px; font-size: 14.200px; line-height: 18px; font-weight: 600; color: #006ce0; border-bottom: 1px dashed #006ce0; }
.scroll { width: 19px; background: #fafafa; display: flex; flex-direction: column; align-items: center; color: #8b8b8b; padding: 6px 0 4px; }
.up { transform: scaleY(-1); }
.thumb { width: 11px; height: 189px; margin-top: 6px; border-radius: 6px; background: #8b8b8b; }
.down { margin-top: auto; }

main { flex: 1; padding: 12px 20px 0 20px; background: #fcfcfd; }
.title-row { display: flex; justify-content: space-between; height: 34px; align-items: center; }
h1 { font: 700 28px/34px "Noto Sans", sans-serif; letter-spacing: .36px; margin-top: -2px; }
h2 { font: 700 22.500px/30px "Noto Sans", sans-serif; letter-spacing: .2px; }
.btn { height: 34px; border: 2px solid #006ce0; border-radius: 17px; color: #006ce0; background: #fff; font-weight: 600; display: flex; align-items: center; justify-content: center; white-space: nowrap; padding-bottom: 1px; }
.actions { width: 131px; gap: 13px; padding-left: 1px; }
.card { border: 1.500px solid #c6c6cd; border-radius: 20px; background: #fff; padding: 0 25px; }
.details { height: 294px; margin-top: 22px; padding-top: 17px; }
.cols { margin-top: 10px; display: grid; grid-template-columns: 372px 392px 391px 1fr; height: 216px; }
.col { display: flex; flex-direction: column; gap: 20px; white-space: nowrap; }
.col + .col { border-left: 1px solid #c6c6cd; padding-left: 20px; }
.col dl:first-child { margin-top: -1px; }
dt { font-weight: 600; height: 25px; letter-spacing: -.03px; }
.copy { color: #006ce0; vertical-align: -5px; margin: 0 7px 0 5px; }
dd { height: 25px; }
.col:first-child dl:nth-child(2) dd { height: 50px; }
.ok { color: #00802f; }
.ok svg { vertical-align: -5px; margin-right: 5px; }
.ext { vertical-align: -4px; }
.info { font-size: 14.200px; line-height: 1; color: #006ce0; margin-left: 14px; }

.tabs { display: flex; align-items: center; margin-top: 18px; height: 50px; padding-top: 1px; border-bottom: 1px solid #c6c6cd; font-size: 18.500px; letter-spacing: .2px; font-weight: 700; color: #424650; }
.t { height: 25px; line-height: 23px; border-right: 1px solid #c6c6cd; text-align: center; }
.t1 { position: relative; width: 294px; color: #006ce0; }
.t1::after { content: ""; position: absolute; left: 2px; right: 0; bottom: -12px; height: 5px; border-radius: 3px; background: #006ce0; }
.t2 { width: 157px; }
.t3 { width: 94px; border: 0; }

.second { height: 199px; margin-top: 15px; padding-top: 15px; }
.card-head { display: flex; height: 34px; align-items: center; }
.round { margin-left: auto; width: 34px; height: 34px; border: 2px solid #006ce0; border-radius: 50%; color: #006ce0; display: flex; align-items: center; justify-content: center; }
.edit { width: 381px; margin-left: 10px; }
.filter-row { margin-top: 6px; display: flex; height: 35px; }
.filter { width: 810px; border: 1.500px solid #8c8c94; border-radius: 10px; display: flex; align-items: center; gap: 11px; padding: 0 0 1px 15px; color: #656871; }
.filter i { margin-top: -1px; }
.pager { margin-left: auto; display: flex; align-items: center; gap: 25px; color: #b4b4bb; padding-right: 16px; }
.pager b { color: #0f141a; font-weight: 600; margin-top: -1px; }
.prefs { border-left: 1px solid #c6c6cd; padding-left: 17px; width: 45px; display: flex; align-items: center; color: #424650; }
.thead { display: grid; grid-template-columns: 375px 375px 375px 1fr; height: 42px; padding-top: 12px; border-bottom: 1px solid #c6c6cd; font-weight: 600; color: #424650; letter-spacing: -.08px; }
.th { height: 22px; border-right: 2px solid #8c8c94; display: flex; align-items: center; justify-content: space-between; padding: 0 17px 0 20px; }
.th.sorted { padding-left: 3px; color: #0f141a; }
.empty { text-align: center; margin-top: 14px; color: #656871; letter-spacing: -.05px; }

.aws-foot { height: 42px; flex: none; background: #161d26; border-top: 1px solid #424650; padding: 0 19px 0 20px; display: flex; align-items: center; color: #ebebf0; font-size: 14.200px; font-weight: 500; white-space: nowrap; }
.f1 { margin-left: 6px; font-size: 14.600px; }
.f2 { margin-left: 31px; }
.copyr { margin-left: auto; color: #c6c6cd; font-size: 14.600px; font-weight: 400; }
.f3 { margin-left: 37px; }
.f4, .f5 { margin-left: 31px; }

/* desktop taskbar */
.taskbar { height: 60px; flex: none; background: #1c1c1c; border-top: 1px solid #424242; display: flex; align-items: center; color: #fff; font: 15px/20px "Open Sans", sans-serif; letter-spacing: -.3px; }
.weather { display: flex; width: 530px; padding-left: 24px; align-items: center; }
.weather svg { margin-top: -10px; }
.weather text { font: 15px "Open Sans", sans-serif; fill: #331216; }
.w-text { margin: -3px 0 0 4px; display: flex; flex-direction: column; letter-spacing: -.15px; }
.w-text b { font-weight: 400; letter-spacing: -.5px; }
.w-text span { color: #c8c8c8; }
.tb-search { width: 275px; height: 40px; margin-left: 17px; border-radius: 20px; background: #3a3a3a; border: 1px solid #4a4a4a; display: flex; align-items: center; padding: 0 6px 0 14px; font-size: 17px; color: #cfcfcf; }
.tb-search span { flex: 1; margin-left: 12px; }
.apps-row { display: flex; align-items: center; gap: 25px; margin-left: 15px; }
.mysql { font: 7.500px "Noto Sans", sans-serif; fill: #fff; }
.chrome-tile { position: relative; width: 44px; height: 50px; margin-left: -10px; border-radius: 6px; background: #2a2a2a; border: 1px solid #363636; box-shadow: 6px 0 0 -1px #242424; padding: 9px 0 0 9px; }
.mini { position: absolute; left: 24px; top: 2px; }
.bar { position: absolute; left: 14px; bottom: 0; width: 20px; height: 4px; border-radius: 2px; background: #d6c37c; }
.tray { margin-left: auto; display: flex; align-items: center; padding-right: 24px; }
.one { margin-left: 23px; }
.lang { margin: -2px 0 0 23px; width: 30px; text-align: center; }
.wifi { margin-left: 22px; }
.vol, .bat { margin-left: 10px; }
.clock { margin: -3px 0 0 17px; width: 64px; text-align: right; white-space: nowrap; }
```
